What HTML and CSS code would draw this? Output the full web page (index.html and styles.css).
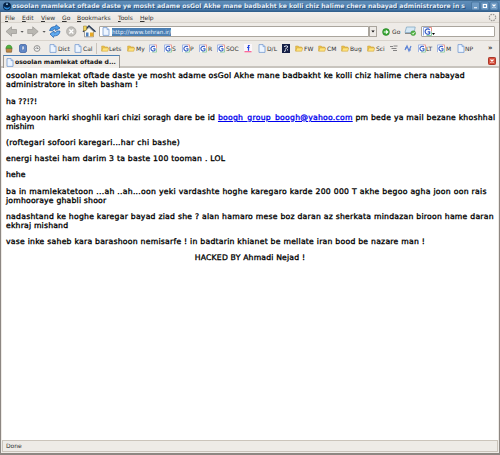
FILE: index.html
```html
<!DOCTYPE html>
<html lang="en">
<head>
<meta charset="utf-8">
<title>osoolan mamlekat oftade</title>
<link rel="stylesheet" href="styles.css">
</head>
<body>
<svg class="defs" aria-hidden="true">
  <symbol id="page" viewBox="0 0 8 9"><path d="M1 .6h4l2 2v5.8H1z" fill="#edf5ff" stroke="#7499cf" stroke-width=".8"/><path d="M5 .6v2h2" fill="#b9d0f2" stroke="#7499cf" stroke-width=".6"/></symbol>
  <symbol id="folder" viewBox="0 0 9 8"><path d="M.8 7V1.3h2.8l.8 1h3v1.2" fill="#f3c94a" stroke="#c9a040" stroke-width=".7"/><path d="M.9 7 2 3.3h6.6L7.6 7z" fill="#ffe47c" stroke="#d0a640" stroke-width=".7"/></symbol>
  <symbol id="google" viewBox="0 0 9 9"><path d="M.5 8.5v-8h8v8z" fill="#fff"/><path d="M.5 8.500v-8h6" fill="none" stroke="#86a2e0" stroke-width=".9"/><path d="M6 .5h2.500v4" fill="none" stroke="#e8857c" stroke-width=".9"/><path d="M8.500 4.500v4h-5" fill="none" stroke="#7cc795" stroke-width=".9"/><path d="M6.700 2.800C5 1 2.100 2.200 2.100 4.600S5 8 6.700 6.500V4.800H4.700" fill="none" stroke="#3158c4" stroke-width="1.200"/></symbol>
</svg>
<div class="window">
  <header class="titlebar">
    <svg class="appicon" viewBox="0 0 10 10"><circle cx="5" cy="5.300" r="4" fill="#072447"/><path d="M1.500 5q1 3.500 3.500 3.500T8.500 5Q7 7 5 6.800T1.500 5" fill="#2a8de0"/><path d="m5 1-1 3h2z" fill="#8cc5ee"/></svg>
    <span class="title">osoolan mamlekat oftade daste ye mosht adame osGol Akhe mane badbakht ke kolli chiz halime chera nabayad administratore in s</span>
    <svg class="winbtns" viewBox="0 0 28 10"><g fill="#6e9ac4" stroke="#3a6690" stroke-width=".6"><rect x=".5" y="1" width="8" height="8" rx="1"/><rect x="9.800" y="1" width="8" height="8" rx="1"/><rect x="19" y="1" width="8" height="8" rx="1"/></g><path d="M3 6.800h3M12.300 3.500h3.200v3h-3.200zM21.500 3.500l3 3m0-3-3 3" fill="none" stroke="#fff" stroke-width="1.100"/></svg>
  </header>
  <nav class="menubar"><span class="m1">File</span><span class="m2">Edit</span><span class="m3">View</span><span class="m4">Go</span><span class="m5">Bookmarks</span><span class="m6">Tools</span><span class="m7">Help</span>
    <svg class="throbber" viewBox="0 0 9 9"><circle cx="4.500" cy="4.500" r="3.200" fill="none" stroke="#9c9a96" stroke-width="1.200" stroke-dasharray="1.600 .9"/></svg>
  </nav>
  <div class="navbar">
    <svg class="navicons" viewBox="0 0 96 17">
      <g fill="#b9b7b2" stroke="#8f8d89" stroke-width=".6"><path d="m2 8.500 5.500-4.700v2.700H12.500v4H7.500v2.700z"/><path d="M34.200 8.500 28.700 3.800v2.700h-5v4h5v2.700z"/></g>
      <path d="M16.500 8h3.200l-1.600 1.800zM38.500 8h3.200l-1.600 1.800z" fill="#555"/>
      <path d="M45.500 7.500q1-4 5-4h1l.5-1.700L56 5l-4.500 2.500.3-1.700q-2.500-.3-3.300 2z" fill="#4d9de8" stroke="#1f5ba6" stroke-width=".7"/>
      <path d="M56 8q-.500 4.500-4.500 4.800h-1.500l-.5 1.700L46 11l4-3 .3 2q2.300 0 2.700-2z" fill="#5faaf0" stroke="#1f5ba6" stroke-width=".7"/>
      <circle cx="67.300" cy="8.500" r="4.700" fill="#c3c1bd" stroke="#a19f9b" stroke-width=".7"/><path d="m65.300 6.500 4 4m0-4-4 4" stroke="#fff" stroke-width="1.400"/>
      <path d="M80.500 8.500v5.300h9V8.500L85 4.500z" fill="#fafaf4" stroke="#6c6a66" stroke-width=".6"/><path d="m79 8.800 6-5.800 6.500 5.800" fill="none" stroke="#2a3c57" stroke-width="1.400"/><path d="M79.500 3h3v4l-3 1z" fill="#f1d35c" stroke="#8d7624" stroke-width=".5"/><path d="M82 9.500h2.500v4H82z" fill="#4f81bf"/><path d="M86 9.500h3.500v4H86z" fill="#e7a927"/>
    </svg>
    <div class="url"><svg class="i8"><use href="#page"/></svg><span class="address">http://www.tehran.ir/</span></div>
    <div class="drop"><svg viewBox="0 0 6 4"><path d="M.5.5h5L3 3.500z" fill="#111"/></svg></div>
    <svg class="goicon" viewBox="0 0 8 8"><circle cx="4" cy="4" r="3.400" fill="#39a935" stroke="#237a21" stroke-width=".6"/><path d="M1.800 4h3.500M4 2.300 5.800 4 4 5.700" fill="none" stroke="#fff" stroke-width="1.100"/></svg>
    <span class="go">Go</span>
    <svg class="mail" viewBox="0 0 13 11"><path d="M2.500 1h8.700l-1 5.500H1z" fill="#d5e8f5" stroke="#78a1bd" stroke-width=".7"/><path d="M1 7.500h8" stroke="#8a8986"/><circle cx="9.200" cy="7.200" r="2.400" fill="#55b848" stroke="#388b2e" stroke-width=".5"/><path d="m8 7.200 1 1 1.500-2" fill="none" stroke="#fff" stroke-width=".8"/></svg>
    <div class="search"><svg class="i9"><use href="#google"/></svg><svg class="tiny" viewBox="0 0 3 2"><path d="M0 0h3L1.500 2z"/></svg></div>
  </div>
  <div class="bookmarks">
    <svg class="b b1" viewBox="0 0 8 9"><path d="M1 4.500h6l-.5 3.700h-5z" fill="#bd8846" stroke="#75522a" stroke-width=".6"/><path d="M.8 4.300Q1.500 1 4 1t3.200 3.300z" fill="#54b140" stroke="#348828" stroke-width=".5"/></svg>
    <svg class="b b2" viewBox="0 0 8 9"><rect x=".7" y=".7" width="6.600" height="7.600" rx="1" fill="#6c94d3" stroke="#3e62a3"/><path d="M3 2v4.500L4 5.500l1.200 1V2z" fill="#e7effd" stroke="#24498e" stroke-width=".5"/></svg>
    <svg class="b b3" viewBox="0 0 9 9"><circle cx="4.500" cy="4.500" r="3.300" fill="#eee" stroke="#8a8987" stroke-width="1"/><path d="M4.500 2.500v2h1.700M2.700 4.500h1" fill="none" stroke="#686765" stroke-width=".8"/></svg>
    <svg class="b b4"><use href="#page"/></svg><span class="t4">Dict</span>
    <svg class="b b5"><use href="#page"/></svg><span class="t5">Cal</span>
    <i class="divider"></i>
    <svg class="b b6"><use href="#folder"/></svg><span class="t6">Lets</span>
    <svg class="b b7"><use href="#folder"/></svg><span class="t7">My</span>
    <svg class="b b8"><use href="#google"/></svg>
    <svg class="b b9"><use href="#google"/></svg><span class="t9">S</span>
    <svg class="b b10"><use href="#google"/></svg><span class="t10">P</span>
    <svg class="b b11"><use href="#google"/></svg><span class="t11">R</span>
    <svg class="b b12"><use href="#google"/></svg><span class="t12">SOC</span>
    <svg class="b b13" viewBox="0 0 8 9"><rect width="8" height="7" fill="#fbf7fb"/><path d="M.5 7.700h7" stroke="#ff5c92" stroke-width="1.200"/><path d="M5.800 1.500H4.500v5.200M3 3.500h2.500" fill="none" stroke="#2648e0" stroke-width="1.200"/></svg>
    <svg class="b b14"><use href="#page"/></svg><span class="t14">D/L</span>
    <svg class="b b15" viewBox="0 0 8 9"><rect width="8" height="9" fill="#151f45"/><path d="M2 2.500q3-1.500 4 .2L3 5.500m-1 2 2-1m1-1 1 .7" fill="none" stroke="#e9edf8" stroke-width="1"/></svg>
    <svg class="b b16"><use href="#folder"/></svg><span class="t16">FW</span>
    <svg class="b b17"><use href="#folder"/></svg><span class="t17">CM</span>
    <svg class="b b18"><use href="#folder"/></svg><span class="t18">Bug</span>
    <svg class="b b19"><use href="#folder"/></svg><span class="t19">Sci</span>
    <svg class="b b20" viewBox="0 0 8 9"><path d="M0 2.500h3M3.500 2h4M1.500 4.500h5M3 6.500h4" stroke="#777" stroke-width=".9"/></svg>
    <svg class="b b21" viewBox="0 0 8 9"><path d="m1 6 2-4 2 5 2-5M1 4h2m2 2h2" fill="none" stroke="#5c83d6" stroke-width="1.200"/></svg>
    <svg class="b b22"><use href="#google"/></svg><span class="t22">LT</span>
    <svg class="b b23"><use href="#google"/></svg><span class="t23">M</span>
    <svg class="b b24"><use href="#page"/></svg><span class="t24">NP</span>
    <span class="more">»</span>
  </div>
  <div class="tabs">
    <div class="tab"><svg class="i8"><use href="#page"/></svg><span class="tabtitle">osoolan mamlekat oftade d...</span></div>
    <svg class="close" viewBox="0 0 8 8"><rect x=".5" y=".5" width="7" height="7" rx=".8" fill="#d9523f" stroke="#a93729"/><path d="m2.500 2.500 3 3m0-3-3 3" stroke="#fff" stroke-width="1.100"/></svg>
  </div>
  <main class="content">
    <p><span class="l1">osoolan mamlekat oftade daste ye mosht adame osGol Akhe mane badbakht ke kolli chiz halime chera nabayad</span><br><span class="l2">administratore in siteh basham !</span></p>
    <p><span class="l3">ha ??!?!</span></p>
    <p><span class="l4">aghayoon harki shoghli kari chizi soragh dare be id <a href="#">boogh_group_boogh@yahoo.com</a> pm bede ya mail bezane khoshhal</span><br><span class="l5">mishim</span></p>
    <p><span class="l6">(roftegari sofoori karegari...har chi bashe)</span></p>
    <p><span class="l7">energi hastei ham darim 3 ta baste 100 tooman . LOL</span></p>
    <p><span class="l8">hehe</span></p>
    <p><span class="l9">ba in mamlekatetoon ...ah ..ah...oon yeki vardashte hoghe karegaro karde 200 000 T akhe begoo agha joon oon rais</span><br><span class="l10">jomhooraye ghabli shoor</span></p>
    <p><span class="l11">nadashtand ke hoghe karegar bayad ziad she ? alan hamaro mese boz daran az sherkata mindazan biroon hame daran</span><br><span class="l12">ekhraj mishand</span></p>
    <p><span class="l13">vase inke saheb kara barashoon nemisarfe ! in badtarin khianet be mellate iran bood be nazare man !</span></p>
    <p class="center"><span class="l14">HACKED BY Ahmadi Nejad !</span></p>
  </main>
  <footer class="status"><span>Done</span></footer>
</div>
</body>
</html>
```
FILE: styles.css
```css
* { box-sizing: border-box; }
body { margin: 0; background: #fff; font-family: "DejaVu Sans", sans-serif; color: #333; overflow: hidden; }
svg { display: block; flex: none; }
.defs { position: absolute; width: 0; height: 0; }
.window { width: 500px; height: 455px; display: flex; flex-direction: column; border: 1px solid #8d8782; border-top: 0; border-bottom-width: 2px; background: #eeebe7; }
.titlebar { height: 12px; flex: none; margin: 0 -1px; display: flex; align-items: center; background: linear-gradient(#31597f, #5f8db8 12%, #4a7cad 75%, #2e5b87); color: #e6eef6; }
.appicon { width: 10px; height: 10px; margin-left: 2px; }
.title { flex: none; margin-left: 0; width: 459px; font-size: 6.12px; font-weight: bold; line-height: 12px; white-space: nowrap; text-shadow: 1px 1px 0 #274d75; }
.winbtns { width: 28px; height: 10px; }
.menubar { height: 11px; flex: none; display: flex; align-items: center; font-size: 6px; border-bottom: 1px solid #d8d3cc; background: linear-gradient(#f3f0ed, #e9e5df); }
.menubar span { white-space: nowrap; flex: none; }
.menubar span::first-letter { text-decoration: underline; }
.m1 { margin-left: 4px; width: 17px; }
.m2 { width: 19px; }
.m3 { width: 21px; }
.m4 { width: 15px; }
.m5 { width: 41px; }
.m6 { width: 22px; }
.throbber { width: 9px; height: 9px; margin-left: auto; margin-right: 2px; }
.navbar { height: 17px; flex: none; display: flex; align-items: center; }
.navicons { width: 96px; height: 17px; margin-left: 3px; margin-right: -1px; }
.url { width: 270px; height: 11px; border: 1px solid #aaa59d; border-radius: 1px 0 0 1px; background: #fff; display: flex; align-items: center; padding-left: 2px; }
.i8 { width: 8px; height: 9px; }
.i9 { width: 9px; height: 9px; }
.address { background: #4b7fb3; color: #eaf4ff; margin-left: 2px; font-size: 5.7px; line-height: 8px; white-space: nowrap; }
.drop { width: 8px; height: 11px; border: 1px solid #aaa59d; display: flex; align-items: center; justify-content: center; }
.drop svg { width: 4px; height: 3px; }
.goicon { width: 8px; height: 8px; margin-left: 5px; }
.go { font-size: 6px; margin-left: 2px; width: 12px; }
.mail { width: 13px; height: 11px; }
.search { width: 74px; height: 11px; margin-left: 4px; border: 1px solid #aaa59d; border-radius: 1px; background: #fff; display: flex; align-items: center; padding-left: 1px; }
.tiny { width: 3px; height: 2px; align-self: flex-end; margin-bottom: 1px; }
.bookmarks { height: 15px; flex: none; border-top: 1px solid #d8d3cc; display: grid; grid-template-columns: repeat(498, 1px); grid-template-rows: 14px; align-items: center; font-size: 6px; }
.bookmarks > * { grid-row: 1; white-space: nowrap; width: max-content; }
.bookmarks > .b { width: 8px; height: 9px; }
.b1 { grid-column: 5; } .b2 { grid-column: 19; } .b3 { grid-column: 33; }
.b4 { grid-column: 49; } .t4 { grid-column: 58; }
.b5 { grid-column: 74; } .t5 { grid-column: 83; }
.bookmarks > .divider { grid-column: 96; width: 1px; height: 11px; background: #c9c4bc; }
.b6 { grid-column: 101; } .t6 { grid-column: 109; }
.b7 { grid-column: 127; } .t7 { grid-column: 136; }
.b8 { grid-column: 149; }
.b9 { grid-column: 164; } .t9 { grid-column: 172; }
.b10 { grid-column: 182; } .t10 { grid-column: 190; }
.b11 { grid-column: 199; } .t11 { grid-column: 208; }
.b12 { grid-column: 217; } .t12 { grid-column: 226; }
.b13 { grid-column: 244; }
.b14 { grid-column: 258; } .t14 { grid-column: 267; }
.b15 { grid-column: 282; }
.b16 { grid-column: 295; } .t16 { grid-column: 304; }
.b17 { grid-column: 318; } .t17 { grid-column: 327; }
.b18 { grid-column: 341; } .t18 { grid-column: 350; }
.b19 { grid-column: 367; } .t19 { grid-column: 376; }
.b20 { grid-column: 390; } .b21 { grid-column: 404; }
.b22 { grid-column: 418; } .t22 { grid-column: 426; }
.b23 { grid-column: 437; } .t23 { grid-column: 446; }
.b24 { grid-column: 457; } .t24 { grid-column: 465; }
.more { grid-column: 488; font-weight: bold; font-size: 7px; }
.tabs { height: 13px; flex: none; display: flex; align-items: flex-start; justify-content: space-between; border-bottom: 2px solid #c8c4be; }
.tab { width: 117px; height: 13px; margin-left: 2px; background: #f1eeea; border: 1px solid #9d9892; border-top: 1px solid #4b7fb3; border-bottom: 0; display: flex; align-items: center; padding-left: 2px; font-weight: bold; }
.tabtitle { font-size: 6.1px; margin-left: 1px; margin-top: -2px; white-space: nowrap; color: #111; }
.close { width: 8px; height: 8px; margin: 2px 3px 0 0; }
.content { flex: 1; min-height: 0; margin: 0 1px; padding: 3.4px 4px 0; background: #fff; color: #000; font-size: 7.7px; line-height: 9px; letter-spacing: .25px; -webkit-text-stroke: .32px #000; }
.content p { margin: 0 0 7.2px; white-space: nowrap; }
.content a { color: #00e; -webkit-text-stroke-color: #00e; }
.content .center { text-align: center; }
.l2, .l10, .l12 { letter-spacing: .2px; }
.l3, .l8 { letter-spacing: .1px; }
.l5 { letter-spacing: 0; }
.l6 { letter-spacing: .3px; }
.l9 { letter-spacing: .284px; }
.l14 { letter-spacing: .18px; }
.status { height: 12px; flex: none; margin: 0 1px 1px; border: 1px solid #cbc4bb; font-size: 6px; line-height: 10px; padding-left: 3px; }
```
